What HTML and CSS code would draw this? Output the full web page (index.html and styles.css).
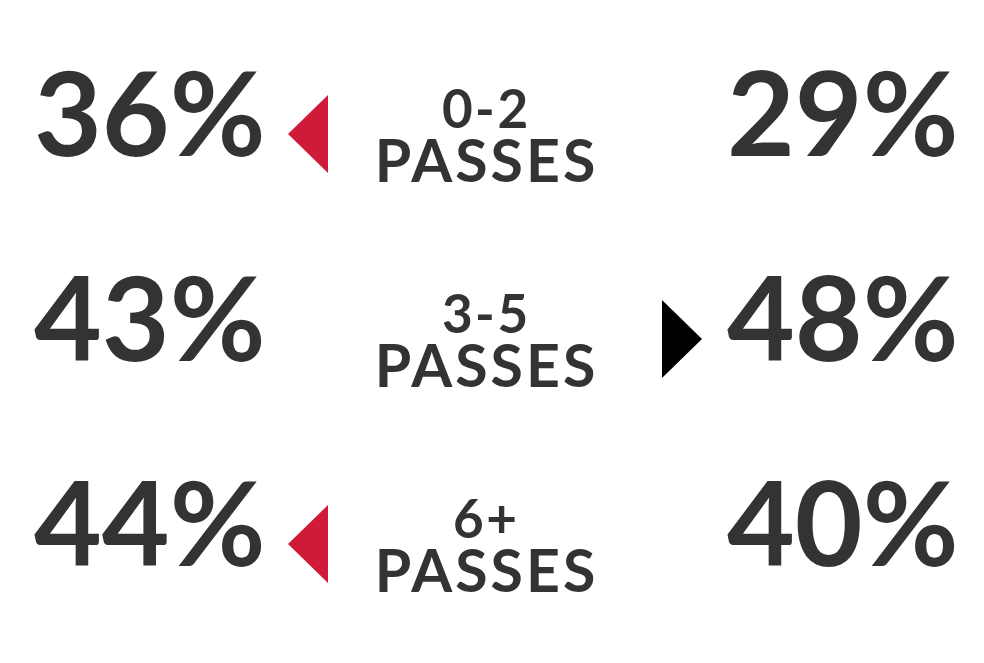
FILE: index.html
```html
<!DOCTYPE html>
<html>
<head>
<meta charset="utf-8">
<link rel="stylesheet" href="styles.css">
</head>
<body>
<div class="board">
  <div class="row">
    <div class="num left">36%</div>
    <div class="mark"><svg class="tri" viewBox="0 0 40 78"><polygon points="0,39 40,0 40,78" fill="#d01a3a"/></svg></div>
    <div class="label"><span class="range">0-2</span><span class="word">PASSES</span></div>
    <div class="mark end"></div>
    <div class="num right">29%</div>
  </div>
  <div class="row">
    <div class="num left">43%</div>
    <div class="mark"></div>
    <div class="label"><span class="range">3-5</span><span class="word">PASSES</span></div>
    <div class="mark end"><svg class="tri" viewBox="0 0 40 78"><polygon points="0,0 40,39 0,78" fill="#000"/></svg></div>
    <div class="num right">48%</div>
  </div>
  <div class="row">
    <div class="num left">44%</div>
    <div class="mark"><svg class="tri" viewBox="0 0 40 78"><polygon points="0,39 40,0 40,78" fill="#d01a3a"/></svg></div>
    <div class="label"><span class="range">6+</span><span class="word">PASSES</span></div>
    <div class="mark end"></div>
    <div class="num right">40%</div>
  </div>
</div>
</body>
</html>
```

FILE: styles.css
```css
html, body {
  margin: 0;
  padding: 0;
  background: #fff;
}
.board {
  width: 984px;
  height: 663px;
  box-sizing: border-box;
  padding: 31px 0 0 34px;
  display: flex;
  flex-direction: column;
  font-family: Lato, "Liberation Sans", sans-serif;
  color: #333;
  overflow: hidden;
}
.row {
  display: grid;
  grid-template-columns: 254px 40px 314px 60px 1fr;
  align-items: center;
  height: 205px;
  flex: none;
}
.num {
  font-size: 117px;
  font-weight: 700;
  line-height: 1;
  margin-bottom: 44px;
  white-space: nowrap;
}
.num.right {
  padding-left: 25px;
}
.mark {
  display: flex;
  align-items: center;
}
.mark.end {
  justify-content: flex-end;
}
.tri {
  width: 40px;
  height: 78px;
  display: block;
}
.label {
  display: flex;
  flex-direction: column;
  align-items: center;
  font-weight: 700;
}
.range {
  font-size: 53px;
  line-height: 52px;
  letter-spacing: 2.5px;
  margin-right: -2.5px;
}
.word {
  font-size: 59px;
  line-height: 52px;
  letter-spacing: 3px;
  margin-right: -3px;
}
```
